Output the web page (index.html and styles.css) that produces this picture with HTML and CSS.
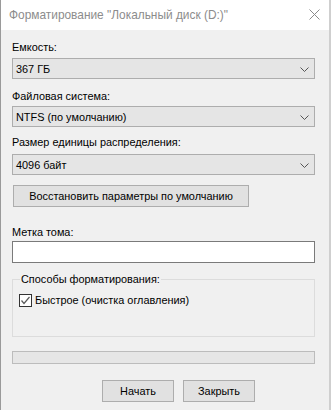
FILE: index.html
```html
<!DOCTYPE html>
<html lang="ru">
<head>
<meta charset="utf-8">
<title>Форматирование</title>
<link rel="stylesheet" href="styles.css">
</head>
<body>
<div class="window">
  <div class="titlebar">
    <span class="title">Форматирование "Локальный диск (D:)"</span>
    <svg class="close" width="11" height="11" viewBox="0 0 11 11"><path d="M0.5 0.5 L10.5 10.5 M10.5 0.5 L0.5 10.5" stroke="#8a8a8a" stroke-width="1" fill="none"/></svg>
  </div>
  <div class="content">
    <div class="label l1">Емкость:</div>
    <div class="combo"><span>367 ГБ</span><svg class="chev" width="9" height="5" viewBox="0 0 9 5"><path d="M0.5 0.5 L4.5 4.5 L8.5 0.5" stroke="#555" fill="none"/></svg></div>
    <div class="label l2">Файловая система:</div>
    <div class="combo"><span>NTFS (по умолчанию)</span><svg class="chev" width="9" height="5" viewBox="0 0 9 5"><path d="M0.5 0.5 L4.5 4.5 L8.5 0.5" stroke="#555" fill="none"/></svg></div>
    <div class="label l3">Размер единицы распределения:</div>
    <div class="combo"><span>4096 байт</span><svg class="chev" width="9" height="5" viewBox="0 0 9 5"><path d="M0.5 0.5 L4.5 4.5 L8.5 0.5" stroke="#555" fill="none"/></svg></div>
    <div class="btn restore">Восстановить параметры по умолчанию</div>
    <div class="label l4">Метка тома:</div>
    <div class="input"></div>
    <fieldset class="group">
      <legend>Способы форматирования:</legend>
      <div class="check-row">
        <span class="checkbox"><svg width="11" height="11" viewBox="0 0 11 11"><path d="M1.5 5.5 L4 8.5 L9.5 2" stroke="#5a5a5a" stroke-width="1.2" fill="none"/></svg></span>
        <span>Быстрое (очистка оглавления)</span>
      </div>
    </fieldset>
    <div class="progress"></div>
    <div class="actions">
      <div class="btn action">Начать</div>
      <div class="btn action">Закрыть</div>
    </div>
  </div>
</div>
</body>
</html>
```
FILE: styles.css
```css
html, body {
  margin: 0;
  padding: 0;
  background: #f0f0f0;
}
body {
  font-family: "Liberation Sans", Arial, sans-serif;
  font-size: 10.9px;
  color: #000;
}
.window {
  width: 331px;
  height: 410px;
  box-sizing: border-box;
  border-left: 1px solid #9a9a9a;
  border-right: 2px solid #cfcfcf;
  background: #f0f0f0;
  overflow: hidden;
}
.titlebar {
  height: 30px;
  background: #fff;
  display: flex;
  align-items: center;
  justify-content: space-between;
  padding: 0 9px 0 8px;
}
.title {
  color: #8c8c8c;
  font-size: 11.9px;
  margin-top: -1px;
  white-space: nowrap;
}
.close {
  margin-top: -1px;
}
.content {
  padding: 0 14px 0 11px;
  display: flex;
  flex-direction: column;
}
.label {
  line-height: 15px;
  height: 15px;
  white-space: nowrap;
}
.l1 { margin-top: 10px; margin-bottom: 3px; }
.l2 { margin-top: 10px; margin-bottom: 2px; }
.l3 { margin-top: 8px; margin-bottom: 4px; }
.l4 { margin-top: 18px; margin-bottom: 1px; }
.combo {
  height: 21px;
  box-sizing: border-box;
  border: 1px solid #adadad;
  background: #e5e5e5;
  display: flex;
  align-items: center;
  justify-content: space-between;
  padding: 1px 5px 0 3px;
  white-space: nowrap;
}
.btn {
  height: 22px;
  box-sizing: border-box;
  border: 1px solid #adadad;
  background: #e1e1e1;
  display: flex;
  align-items: center;
  justify-content: center;
  white-space: nowrap;
}
.restore {
  width: 236px;
  margin-top: 10px;
  margin-left: 1px;
}
.input {
  height: 22px;
  box-sizing: border-box;
  border: 1px solid #7a7a7a;
  background: #fff;
}
.group {
  margin: 9px 0 0 0;
  padding: 0 6px 0 6px;
  border: 1px solid #dcdcdc;
  height: 65px;
  box-sizing: border-box;
  min-inline-size: 0;
}
.group legend {
  padding: 0 1px;
  margin-left: 1px;
  line-height: 15px;
}
.check-row {
  display: flex;
  align-items: center;
  gap: 3px;
  margin-top: 6px;
  line-height: 15px;
  white-space: nowrap;
}
.checkbox {
  width: 13px;
  height: 13px;
  box-sizing: border-box;
  border: 1px solid #333;
  background: #fff;
  display: flex;
  align-items: center;
  justify-content: center;
}
.progress {
  margin-top: 14px;
  height: 13px;
  box-sizing: border-box;
  border: 1px solid #bcbcbc;
  background: #e6e6e6;
}
.actions {
  display: flex;
  gap: 9px;
  margin-top: 16px;
  padding-left: 90px;
}
.action {
  width: 72px;
}
```
